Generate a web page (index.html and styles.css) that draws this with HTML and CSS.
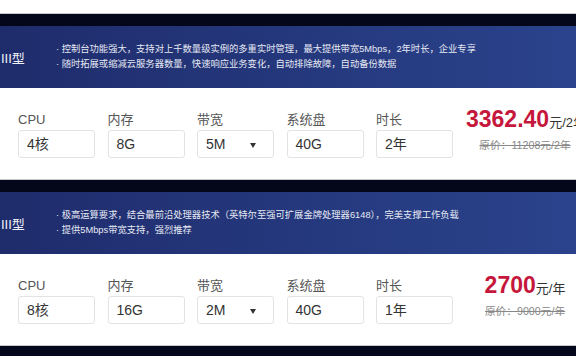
FILE: index.html
```
<html>
    <head>
        <meta charset="utf-8">
        <link rel="stylesheet" href="styles.css">
    </head>
    <body>
        <div class="plan">
            <div class="plan_bar"></div>
            <div class="plan_head">
                <div class="plan_name">III型</div>
                <div class="plan_desc">
                    <div>· 控制台功能强大，支持对上千数量级实例的多重实时管理，最大提供带宽5Mbps，2年时长，企业专享</div>
                    <div>· 随时拓展或缩减云服务器数量，快速响应业务变化，自动排除故障，自动备份数据</div>
                </div>
            </div>
            <div class="plan_body">
                <div class="field"><div class="label">CPU</div><div class="box">4核</div></div>
                <div class="field"><div class="label">内存</div><div class="box">8G</div></div>
                <div class="field"><div class="label">带宽</div><div class="box select">5M</div></div>
                <div class="field"><div class="label">系统盘</div><div class="box">40G</div></div>
                <div class="field"><div class="label">时长</div><div class="box">2年</div></div>
                <div class="price">
                    <div class="now"><b>3362.40</b>元/2年</div>
                    <div class="old">原价：11208元/2年</div>
                </div>
            </div>
        </div>
        <div class="plan">
            <div class="plan_bar"></div>
            <div class="plan_head">
                <div class="plan_name">III型</div>
                <div class="plan_desc">
                    <div>· 极高运算要求，结合最前沿处理器技术（英特尔至强可扩展金牌处理器6148），完美支撑工作负载</div>
                    <div>· 提供5Mbps带宽支持，强烈推荐</div>
                </div>
            </div>
            <div class="plan_body">
                <div class="field"><div class="label">CPU</div><div class="box">8核</div></div>
                <div class="field"><div class="label">内存</div><div class="box">16G</div></div>
                <div class="field"><div class="label">带宽</div><div class="box select">2M</div></div>
                <div class="field"><div class="label">系统盘</div><div class="box">40G</div></div>
                <div class="field"><div class="label">时长</div><div class="box">1年</div></div>
                <div class="price">
                    <div class="now"><b>2700</b>元/年</div>
                    <div class="old">原价：9000元/年</div>
                </div>
            </div>
        </div>
        <div class="plan">
            <div class="plan_bar"></div>
        </div>
    </body>
</html>
```
FILE: styles.css
```
html, body
{
    margin:0;
    overflow:hidden;
}
body
{
    background:#fff;
    padding-top:13px;
    font-family:"Liberation Sans","Noto Sans CJK SC",Arial,sans-serif;
    color:#333;
}
div.plan
{
    border-top:1px solid #c9c9c9;
}
div.plan_bar
{
    height:12px;
    background:#04071a;
}
div.plan_head
{
    height:62px;
    display:flex;
    align-items:center;
    background:linear-gradient(90deg, #1f2c6c, #2a438c);
    color:#e6e9f4;
}
div.plan_name
{
    width:56px;
    padding-left:1px;
    box-sizing:border-box;
    font-size:13px;
    color:#f0f2f8;
}
div.plan_desc
{
    font-size:9.3px;
    line-height:15.5px;
    white-space:nowrap;
}
div.plan_body
{
    height:91px;
    box-sizing:border-box;
    padding:23px 0 0 18px;
    display:flex;
    gap:12.5px;
    overflow:hidden;
}
div.field
{
    width:77px;
    flex:none;
}
div.label
{
    font-size:13px;
    line-height:18px;
    color:#555;
}
div.box
{
    margin-top:1px;
    height:28px;
    box-sizing:border-box;
    border:1px solid #e3e3e3;
    border-radius:3px;
    padding-left:8px;
    font-size:14px;
    line-height:26px;
    color:#333;
    position:relative;
}
div.select:after
{
    content:"";
    position:absolute;
    right:17px;
    top:12px;
    border-left:3.5px solid transparent;
    border-right:3.5px solid transparent;
    border-top:5px solid #333;
}
div.price
{
    flex:none;
    width:118px;
    margin-left:0.5px;
    text-align:center;
    white-space:nowrap;
}
div.now
{
    font-size:13px;
    line-height:26px;
    margin-top:-5px;
}
div.now b
{
    font-size:23px;
    color:#c5173b;
}
div.old
{
    font-size:10.7px;
    line-height:14px;
    margin-top:2px;
    color:#888;
    text-decoration:line-through;
}
```
